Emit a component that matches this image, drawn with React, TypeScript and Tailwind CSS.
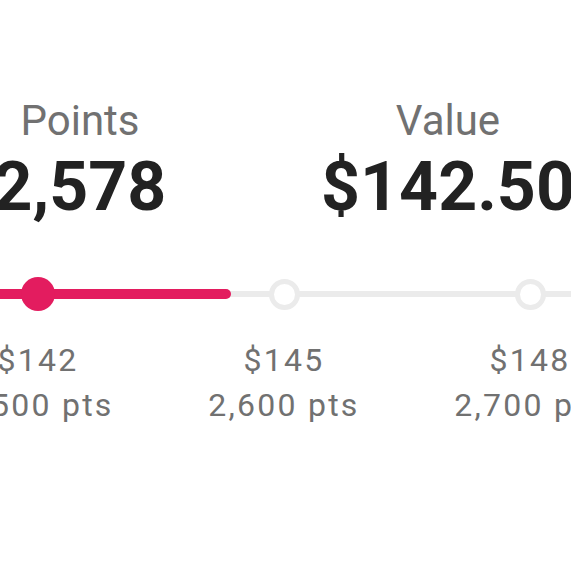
const tiers = [
  { price: '$142', points: '2,500 pts', reached: true },
  { price: '$145', points: '2,600 pts', reached: false },
  { price: '$148', points: '2,700 pts', reached: false },
  { price: '$151', points: '2,800 pts', reached: false },
]

function Stat({ label, value }: { label: string; value: string }) {
  return (
    <div className="flex flex-col items-center">
      <p className="text-[42px] leading-[48px] text-[#717171]">{label}</p>
      <p className="mt-[2px] text-[68px] leading-[80px] font-bold text-[#222222] whitespace-nowrap">
        {value}
      </p>
    </div>
  )
}

export default function App() {
  return (
    <div className="w-[571px] h-[570px] overflow-hidden bg-white font-['Roboto',sans-serif]">
      {/* Points / value summary */}
      <div className="pt-[97px] -ml-[104px] w-[736px] grid grid-cols-2">
        <Stat label="Points" value="2,578" />
        <Stat label="Value" value="$142.50" />
      </div>

      {/* Redemption tiers slider */}
      <div className="mt-[50px] -ml-[85px] w-[984px]">
        <div className="relative h-[34px]">
          <div className="absolute left-0 right-0 top-[14px] h-[6px] bg-[#ebebeb]" />
          <div className="absolute left-0 top-[12px] h-[10px] w-[316px] rounded-full bg-[#e31c5f]" />
          <div className="relative flex h-full">
            {tiers.map((t) => (
              <div key={t.price} className="w-[246px] flex items-center justify-center">
                {t.reached ? (
                  <div className="w-[34px] h-[34px] rounded-full bg-[#e31c5f]" />
                ) : (
                  <div className="w-[31px] h-[31px] rounded-full border-[5px] border-[#ebebeb] bg-white" />
                )}
              </div>
            ))}
          </div>
        </div>
        <div className="mt-[27px] flex">
          {tiers.map((t) => (
            <div
              key={t.price}
              className="w-[246px] flex flex-col items-center text-[32px] leading-[45px] tracking-[0.07em] text-[#717171] whitespace-nowrap"
            >
              <span>{t.price}</span>
              <span>{t.points}</span>
            </div>
          ))}
        </div>
      </div>
    </div>
  )
}
